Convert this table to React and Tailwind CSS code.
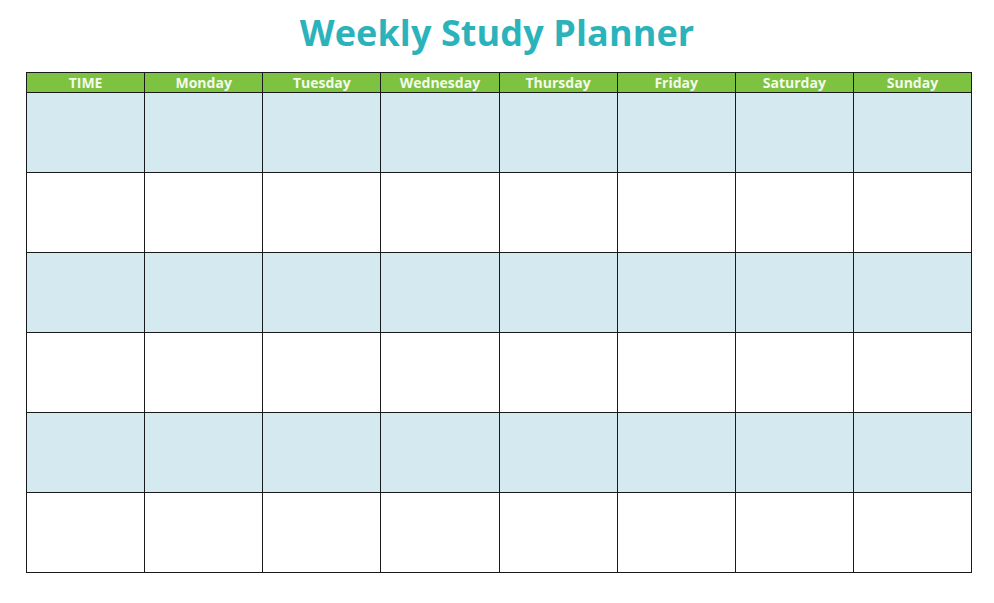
import React from "react";

const days = ["TIME", "Monday", "Tuesday", "Wednesday", "Thursday", "Friday", "Saturday", "Sunday"];

export default function App() {
  const rows = [0, 1, 2, 3, 4, 5];
  return (
    <div className="w-[994px] h-[603px] bg-white overflow-hidden" style={{ fontFamily: '"Open Sans", "Noto Sans", sans-serif' }}>
      <div className="h-[72px] flex items-start justify-center pt-[10px]">
        <h1 className="text-[36px] leading-[46px] font-bold text-[#2bb3bc] tracking-[0.1px]">Weekly Study Planner</h1>
      </div>
      <div className="ml-[26px] w-[946px] border-l border-t border-[#1a1a1a] grid grid-cols-8">
        {days.map((d) => (
          <div key={d} className="h-[20px] bg-[#7ec242] border-r border-b border-[#1a1a1a] flex items-center justify-center text-[14px] font-bold text-[#f4faec] leading-none">
            {d}
          </div>
        ))}
        {rows.map((r) =>
          days.map((d) => (
            <div key={r + d} className={`h-[80px] border-r border-b border-[#1a1a1a] ${r % 2 === 0 ? "bg-[#d4e9f0]" : "bg-white"}`} />
          ))
        )}
      </div>
    </div>
  );
}
